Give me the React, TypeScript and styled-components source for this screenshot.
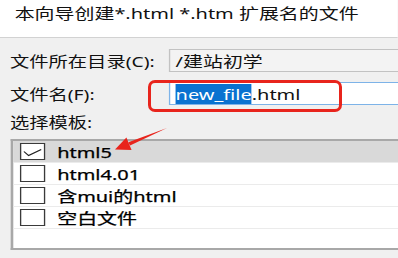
import styled, { createGlobalStyle } from "styled-components";

// the source shot is stretched sideways, so the dialog is laid out narrow and scaled
const SX = 1.33;

const Global = createGlobalStyle`
  html, body {
    margin: 0;
    padding: 0;
    background: #f0f0f0;
  }
  body {
    font-family: "Noto Sans", "Noto Sans CJK SC", sans-serif;
    color: #111;
  }
`;

const Page = styled.div`
  position: relative;
  width: 398px;
  height: 258px;
  overflow: hidden;
`;

const Dialog = styled.div`
  width: ${398 / SX}px;
  height: 258px;
  transform: scaleX(${SX});
  transform-origin: 0 0;
  display: flex;
  flex-direction: column;
`;

const Header = styled.div`
  height: 38px;
  box-sizing: border-box;
  background: #fff;
  border-bottom: 1px solid #d2d2d2;
  padding: 3px 0 0 11px;
  font-size: 15px;
  line-height: 20px;
  white-space: nowrap;
`;

const Body = styled.div`
  flex: 1;
  background: #f0f0f0;
  padding: 11px 0 0 7.5px;
  display: flex;
  flex-direction: column;
`;

const Row = styled.div<{ $top?: number }>`
  display: flex;
  align-items: center;
  height: 23px;
  margin-top: ${(p) => p.$top ?? 0}px;
`;

const Label = styled.div`
  width: 119.5px;
  font-size: 14.5px;
  white-space: nowrap;
`;

const Field = styled.div<{ $focus?: boolean }>`
  flex: 1;
  height: 23px;
  box-sizing: border-box;
  margin-right: -10px;
  padding-left: 4px;
  display: flex;
  align-items: center;
  font-size: 15px;
  white-space: nowrap;
  background: ${(p) => (p.$focus ? "#fff" : "#f3f3f3")};
  border: 1px solid ${(p) => (p.$focus ? "#7db3e8" : "#c2c2c2")};
`;

const Sel = styled.span`
  background: #0a72d0;
  color: #fff;
`;

const Section = styled.div`
  margin-top: 7px;
  font-size: 14.5px;
  line-height: 20px;
`;

const List = styled.div`
  margin-top: 7px;
  margin-right: -10px;
  height: 111px;
  box-sizing: border-box;
  background: #fff;
  border: 2px solid #a8a8a8;
  border-right: none;
`;

const Item = styled.div<{ $selected?: boolean }>`
  height: 22px;
  box-sizing: border-box;
  display: flex;
  align-items: center;
  padding-left: 5.5px;
  border-bottom: 1px solid #ebebeb;
  background: ${(p) => (p.$selected ? "#d9d9d9" : "transparent")};
  font-size: 15px;
  color: #000;
  -webkit-text-stroke: 0.25px #000;
`;

const Box = styled.div`
  width: 19px;
  height: 17px;
  box-sizing: border-box;
  border: 1px solid #3a3a3a;
  background: #fff;
  margin-right: 9px;
  flex-shrink: 0;
  display: flex;
`;

const RedFrame = styled.div`
  position: absolute;
  left: 148px;
  top: 80px;
  width: 194px;
  height: 32px;
  box-sizing: border-box;
  border: 3px solid #e8241c;
  border-radius: 7px;
`;

const Arrow = styled.svg`
  position: absolute;
  left: 0;
  top: 0;
`;

const templates = ["html5", "html4.01", "含mui的html", "空白文件"];

export default function App() {
  return (
    <Page>
      <Global />
      <Dialog>
        <Header>本向导创建*.html *.htm 扩展名的文件</Header>
        <Body>
          <Row>
            <Label>文件所在目录(C):</Label>
            <Field>/建站初学</Field>
          </Row>
          <Row $top={10}>
            <Label>文件名(F):</Label>
            <Field $focus>
              <Sel>new_file</Sel>.html
            </Field>
          </Row>
          <Section>选择模板:</Section>
          <List>
            {templates.map((t, i) => (
              <Item key={t} $selected={i === 0}>
                <Box>
                  {i === 0 && (
                    <svg width="17" height="15" viewBox="0 0 17 15">
                      <path d="M2 7.5 L5.5 11.5 L15 5.5" fill="none" stroke="#222" strokeWidth="1" />
                    </svg>
                  )}
                </Box>
                {t}
              </Item>
            ))}
          </List>
        </Body>
      </Dialog>
      <RedFrame />
      <Arrow width="398" height="258" viewBox="0 0 398 258">
        <polygon points="167,128 130,145.4 128.4,142.2" fill="#e8241c" />
        <polygon points="115,149.5 126.4,137.4 131.6,150" fill="#e8241c" />
      </Arrow>
    </Page>
  );
}
